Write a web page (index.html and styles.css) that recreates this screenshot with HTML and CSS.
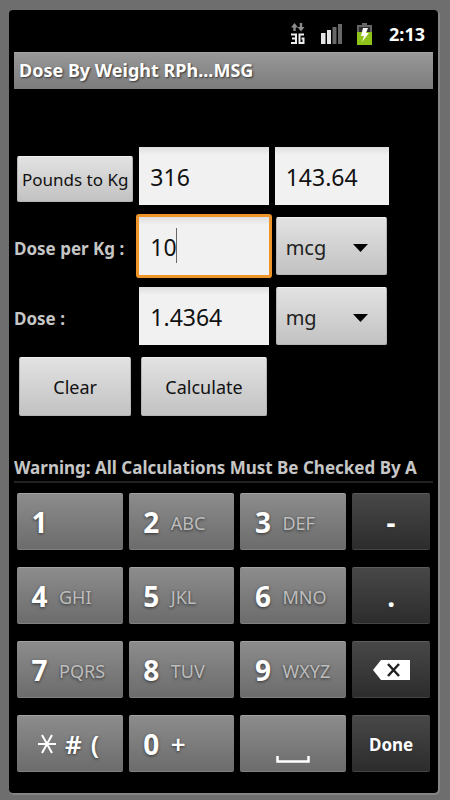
FILE: index.html
```html
<!DOCTYPE html>
<html lang="en">
<head>
<meta charset="utf-8">
<meta name="viewport" content="width=device-width, initial-scale=1">
<title>Dose By Weight</title>
<link rel="stylesheet" href="styles.css">
</head>
<body>
<div class="screen">
  <div class="status">
    <svg class="icon-3g" width="14" height="22" viewBox="0 0 14 22" role="img" aria-label="3G data">
      <path fill="#8c8c8c" d="M3.500 0 7 4.500H4.700V8H2.300V4.500H0ZM8.800 0H11.200V4H13.500L10 8.500 6.500 4H8.800Z"/>
      <path fill="none" stroke="#eee" stroke-width="2" d="M0 11.500H5V20H0M1 15.500H5M13 11.500H8.500V20H12.500V15.500H10.500"/>
    </svg>
    <svg class="icon-signal" width="22" height="22" viewBox="0 0 22 22" role="img" aria-label="Signal">
      <path fill="#e4e4e4" d="M0 10H4.500V21H0ZM6 7H10V21H6Z"/>
      <path fill="#686868" d="M11.500 4H15.500V21H11.500ZM17 1H21V21H17Z"/>
    </svg>
    <svg class="icon-battery" width="16" height="24" viewBox="0 0 16 24" role="img" aria-label="Battery charging">
      <path fill="#666" d="M5 1H10V3H15V23H0V3H5Z"/>
      <path fill="#2e2e2e" d="M2 5H13V10H2Z"/>
      <path fill="#8fc31b" d="M0 10H15V23H0Z"/>
      <path fill="#fff" d="M6 6H11L9 11H12L5 20 7 14H4Z"/>
    </svg>
    <span class="clock">2:13</span>
  </div>
  <h1 class="title">Dose By Weight RPh...MSG</h1>

  <form class="form">
    <button type="button" class="btn btn-small">Pounds to Kg</button>
    <input class="field" type="text" value="316" aria-label="Pounds">
    <input class="field" type="text" value="143.64" aria-label="Kilograms">

    <label class="label" for="per-kg">Dose per Kg :</label>
    <div class="focus">
      <input class="field" id="per-kg" type="text" value="10">
      <span class="caret"></span>
    </div>
    <div class="spinner">
      <select aria-label="Dose per Kg unit"><option>mcg</option><option>mg</option></select>
      <svg class="arrow" width="15" height="8" viewBox="0 0 15 8" aria-hidden="true"><path d="M0 0H15L7.500 8Z"/></svg>
    </div>

    <label class="label" for="dose">Dose :</label>
    <input class="field" id="dose" type="text" value="1.4364">
    <div class="spinner">
      <select aria-label="Dose unit"><option>mg</option><option>mcg</option></select>
      <svg class="arrow" width="15" height="8" viewBox="0 0 15 8" aria-hidden="true"><path d="M0 0H15L7.500 8Z"/></svg>
    </div>

    <button type="reset" class="btn btn-clear">Clear</button>
    <button type="button" class="btn btn-calc">Calculate</button>
  </form>

  <p class="warning">Warning: All Calculations Must Be Checked By A</p>

  <div class="keypad">
    <button type="button" class="key"><b>1</b></button>
    <button type="button" class="key"><b>2</b><span>ABC</span></button>
    <button type="button" class="key"><b>3</b><span>DEF</span></button>
    <button type="button" class="key dark"><b>-</b></button>

    <button type="button" class="key"><b>4</b><span>GHI</span></button>
    <button type="button" class="key"><b>5</b><span>JKL</span></button>
    <button type="button" class="key"><b>6</b><span>MNO</span></button>
    <button type="button" class="key dark"><b>.</b></button>

    <button type="button" class="key"><b>7</b><span>PQRS</span></button>
    <button type="button" class="key"><b>8</b><span>TUV</span></button>
    <button type="button" class="key"><b>9</b><span>WXYZ</span></button>
    <button type="button" class="key dark" aria-label="Delete">
      <svg width="37" height="20" viewBox="0 0 37 20" aria-hidden="true">
        <path fill="#fff" d="M0 10 8 0H37V20H8Z"/>
        <path fill="none" stroke="#222" stroke-width="2.500" d="M15 4 26 16M26 4 15 16"/>
      </svg>
    </button>

    <button type="button" class="key symbols" aria-label="Symbols">
      <svg width="18" height="20" viewBox="0 0 18 20" aria-hidden="true"><path fill="none" stroke="#fff" stroke-width="2" d="M0 10H18M4 1 14 19M14 1 4 19"/></svg>
      <i>#</i><i>(</i>
    </button>
    <button type="button" class="key zero"><b>0</b><i>+</i></button>
    <button type="button" class="key space" aria-label="Space">
      <svg width="34" height="7" viewBox="0 0 34 7" aria-hidden="true"><path fill="none" stroke="#fff" stroke-width="2.500" d="M1.500 0V5.500H32.500V0"/></svg>
    </button>
    <button type="button" class="key dark done">Done</button>
  </div>
</div>
</body>
</html>
```
FILE: styles.css
```css
* { box-sizing: border-box; }

body {
  margin: 0;
  min-height: 100vh;
  padding: 10px 12px 7px 9px;
  background: #6e6e6e;
  font-family: "Noto Sans", "Open Sans", sans-serif;
  display: flex;
}

button, input, select {
  font-family: inherit;
  margin: 0;
  border: 0;
}

.screen {
  flex: 1;
  min-width: 0;
  padding: 0 5px;
  background: #000;
  border-radius: 4px;
  box-shadow: 1px 1px 0 1px #858585;
}

.status {
  height: 42px;
  padding: 5px 8px 0 0;
  display: flex;
  justify-content: flex-end;
  align-items: center;
  color: #fff;
}
.icon-3g { margin-right: 16px; }
.icon-signal { margin-right: 14px; }
.icon-battery { margin-right: 16px; }
.clock {
  font-size: 18px;
  font-weight: 700;
  line-height: 24px;
}

.title {
  margin: 0;
  height: 37px;
  padding: 0 5px;
  background: linear-gradient(#989898, #7c7c7c);
  border-top: 1px solid #a4a4a4;
  color: #fff;
  font-size: 18px;
  font-weight: 700;
  line-height: 34px;
  white-space: nowrap;
  text-shadow: 1px 1px 2px #333;
}

.form {
  margin-top: 58px;
  padding-right: 44px;
  display: grid;
  grid-template-columns: 119fr 129fr 114fr;
  grid-auto-rows: 58px;
  gap: 12px 6px;
  align-items: center;
}

.field {
  width: 100%;
  height: 58px;
  padding: 2px 12px 0 11px;
  background: linear-gradient(#dedede, #f1f1f1 8px);
  color: #111;
  font-size: 23px;
  outline: none;
}

.focus {
  position: relative;
  height: 58px;
  border-radius: 1px;
  box-shadow: 0 0 0 3px #ee9428;
}
.caret {
  position: absolute;
  left: 37px;
  top: 11px;
  width: 1px;
  height: 35px;
  background: #666;
}

.btn, .spinner {
  background: linear-gradient(#e2e2e2, #c2c2c2);
  border: 1px solid #b5b5b5;
  border-top-color: #f0f0f0;
  border-radius: 2px;
  color: #111;
}
.btn {
  height: 59px;
  padding: 1px 0 0;
  font-size: 18px;
  white-space: nowrap;
}
.btn-small { height: 46px; margin-left: 3px; margin-top: 5px; font-size: 17px; }
.btn-clear { margin-left: 5px; margin-right: 2px; }
.btn-calc { margin-left: 2px; margin-right: 2px; }

.spinner {
  position: relative;
  height: 58px;
  margin: 0 2px 0 1px;
}
.spinner select {
  appearance: none;
  width: 100%;
  height: 100%;
  padding: 2px 36px 0 9px;
  background: transparent;
  color: #222;
  font-size: 20px;
  outline: none;
}
.arrow {
  position: absolute;
  right: 18px;
  top: 26px;
  pointer-events: none;
}

.label {
  color: #c6c6c6;
  font-size: 17px;
  font-weight: 700;
  white-space: nowrap;
  padding-top: 4px;
}

.warning {
  margin: 38px 0 10px;
  height: 30px;
  border-bottom: 2px solid #222;
  color: #c6c6c6;
  font-size: 17px;
  font-weight: 700;
  line-height: 30px;
  white-space: nowrap;
  overflow: hidden;
}

.keypad {
  padding: 0 3px 20px;
  display: grid;
  grid-template-columns: 106fr 106fr 106fr 78fr;
  grid-auto-rows: 57px;
  gap: 17px 6px;
}
.key {
  min-width: 0;
  padding: 0 0 0 14px;
  display: flex;
  align-items: center;
  gap: 11px;
  background: linear-gradient(#8c8c8c, #6c6c6c);
  border-top: 1px solid #a2a2a2;
  border-bottom: 1px solid #808080;
  border-radius: 2px;
  color: #fff;
  font-size: 28px;
  text-shadow: 0 1px 3px #333;
}
.key b { width: 17px; text-align: center; line-height: 36px; }
.key span { color: #bdbdbd; font-size: 18px; padding-top: 2px; }
.key i { font-style: normal; font-size: 26px; font-weight: 600; line-height: 36px; }
.dark {
  padding: 0;
  justify-content: center;
  background: linear-gradient(#484848, #2c2c2c);
  border-top-color: #5c5c5c;
  border-bottom-color: #444;
}
.symbols { padding-left: 21px; gap: 9px; }
.space {
  padding: 0 0 8px;
  align-items: flex-end;
  justify-content: center;
}
.done { font-size: 17px; font-weight: 700; padding-top: 2px; }
```
